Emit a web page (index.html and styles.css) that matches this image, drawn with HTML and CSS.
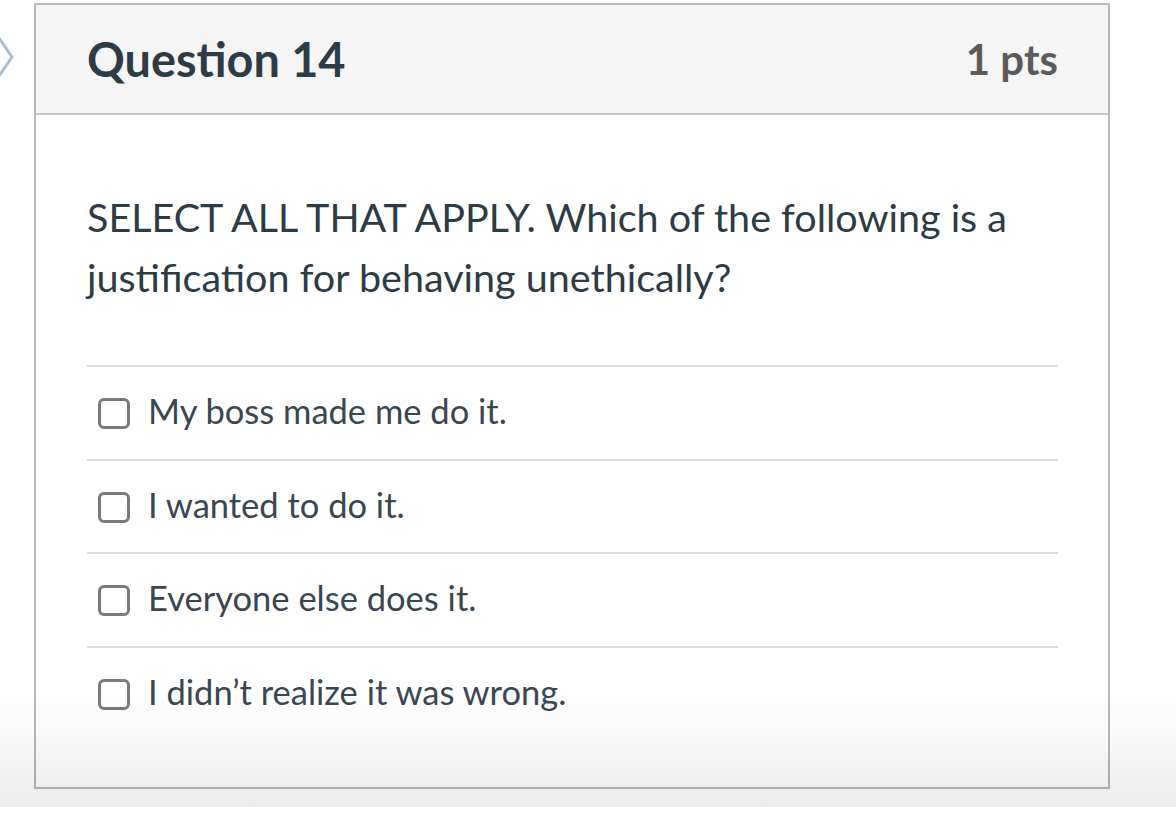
FILE: index.html
```html
<!DOCTYPE html>
<html>
<head>
<meta charset="utf-8">
<link rel="stylesheet" href="styles.css">
</head>
<body>
<div class="page">
  <svg class="chevron" width="14" height="42" viewBox="0 0 14 42"><path d="M-1 2 L12 21 L-1 40" fill="none" stroke="#aebccb" stroke-width="3"/></svg>
  <div class="card">
    <div class="card-header">
      <h2 class="q-title">Question 14</h2>
      <span class="q-pts">1 pts</span>
    </div>
    <div class="card-body">
      <p class="q-text">SELECT ALL THAT APPLY. Which of the following is a justification for behaving unethically?</p>
      <div class="answers">
        <label class="answer"><span class="box"></span><span class="answer-text">My boss made me do it.</span></label>
        <label class="answer"><span class="box"></span><span class="answer-text">I wanted to do it.</span></label>
        <label class="answer"><span class="box"></span><span class="answer-text">Everyone else does it.</span></label>
        <label class="answer"><span class="box"></span><span class="answer-text">I didn’t realize it was wrong.</span></label>
      </div>
    </div>
  </div>
  <div class="fade"></div>
</div>
</body>
</html>
```
FILE: styles.css
```css
html, body {
  margin: 0;
  padding: 0;
  background: #ffffff;
}
body {
  width: 1176px;
  height: 816px;
  overflow: hidden;
  font-family: Lato, "Open Sans", sans-serif;
  color: #2d3b45;
}
.page {
  position: relative;
  width: 1176px;
  height: 816px;
  padding-top: 3px;
  box-sizing: border-box;
}
.chevron {
  position: absolute;
  left: 0;
  top: 36px;
}
.card {
  margin-left: 34px;
  width: 1076px;
  height: 786px;
  box-sizing: border-box;
  border: 2px solid #b9b9b9;
  background: #fff;
  display: flex;
  flex-direction: column;
}
.card-header {
  height: 110px;
  box-sizing: border-box;
  background: #f5f5f5;
  border-bottom: 2px solid #c4c4c4;
  display: flex;
  align-items: center;
  justify-content: space-between;
  padding: 0 50px 0 51px;
}
.q-title {
  margin: 0;
  font-size: 46.8px;
  font-weight: 700;
  color: #2d3b45;
}
.q-pts {
  font-size: 42px;
  font-weight: 700;
  color: #5b5b5b;
}
.card-body {
  padding: 72px 50px 0 51px;
}
.q-text {
  margin: 0 0 58px;
  font-size: 39.5px;
  line-height: 60px;
  color: #2d3b45;
}
.answers {
  display: flex;
  flex-direction: column;
}
.answer {
  display: flex;
  align-items: center;
  height: 93.5px;
  box-sizing: border-box;
  border-top: 2px solid #dcdcdc;
  padding-left: 11px;
  gap: 18px;
}
.box {
  width: 32px;
  height: 31px;
  box-sizing: border-box;
  border: 3px solid #7a7a7a;
  border-radius: 6px;
  background: #fff;
  flex: none;
  margin-top: 2px;
}
.answer-text {
  font-size: 34.5px;
  color: #3a4650;
  margin-top: -4px;
}
.fade {
  position: absolute;
  left: 0;
  right: 0;
  top: 690px;
  height: 117px;
  background: linear-gradient(to bottom, rgba(0,0,0,0), rgba(0,0,0,0.075));
  pointer-events: none;
}
```
